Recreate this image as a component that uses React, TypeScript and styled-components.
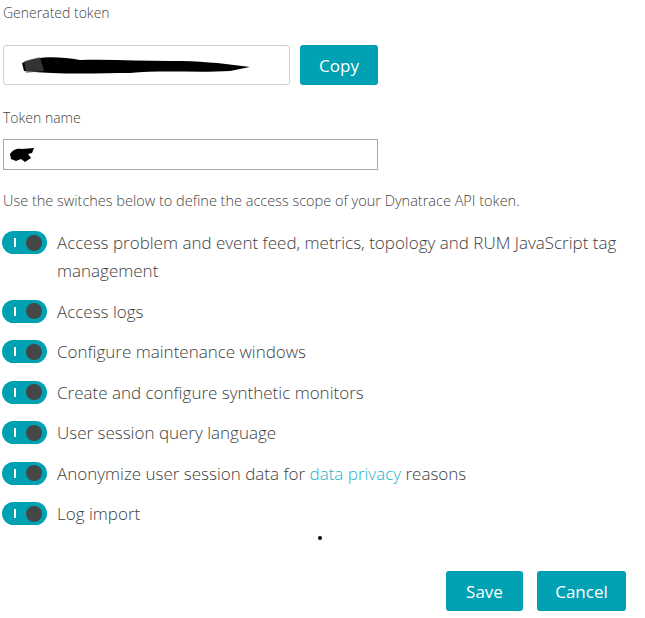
import styled, { createGlobalStyle } from "styled-components";

const accent = "#00a1b2";
const text = "#3d3e3e";

const GlobalStyle = createGlobalStyle`
  html, body {
    margin: 0;
    padding: 0;
    background: #ffffff;
  }
  body {
    font-family: "Open Sans", "Noto Sans", sans-serif;
    font-weight: 300;
    color: ${text};
  }
`;

const Page = styled.div`
  width: 645px;
  height: 618px;
  padding: 3px 19px 0 3px;
  box-sizing: border-box;
  display: flex;
  flex-direction: column;
`;

const Label = styled.div<{ $top?: number; $size?: number }>`
  font-size: ${(p) => p.$size ?? 14}px;
  line-height: 20px;
  color: #444444;
  margin-top: ${(p) => p.$top ?? 0}px;
`;

const TokenRow = styled.div`
  display: flex;
  gap: 10px;
  margin-top: 22px;
`;

const TokenField = styled.div`
  width: 287px;
  height: 40px;
  box-sizing: border-box;
  border: 1px solid #cfcfcf;
  border-radius: 3px;
  display: flex;
  align-items: center;
  padding-left: 16px;
`;

const Button = styled.button<{ $width: number }>`
  width: ${(p) => p.$width}px;
  height: 40px;
  border: none;
  border-radius: 3px;
  background: ${accent};
  color: #ffffff;
  font-family: inherit;
  font-weight: 400;
  font-size: 17px;
  padding: 0;
  cursor: pointer;
`;

const NameField = styled.div`
  width: 375px;
  height: 31px;
  box-sizing: border-box;
  border: 1px solid #a9a9a9;
  margin-top: 11px;
  display: flex;
  align-items: center;
  padding-left: 4px;
`;

const ScopeList = styled.div`
  display: flex;
  flex-direction: column;
  gap: 12.5px;
  margin-top: 18px;
  margin-left: -1px;
`;

const ScopeRow = styled.div`
  display: flex;
  align-items: flex-start;
  gap: 10px;
`;

const Toggle = styled.span`
  flex: none;
  width: 45px;
  height: 23px;
  margin-top: 2px;
  border-radius: 12px;
  background: ${accent};
  display: flex;
  align-items: center;
  justify-content: space-between;
  padding: 0 5px 0 12px;
  box-sizing: border-box;

  &::before {
    content: "";
    width: 2px;
    height: 9px;
    background: #ffffff;
  }

  &::after {
    content: "";
    width: 16px;
    height: 16px;
    border-radius: 50%;
    background: #454646;
  }
`;

const ScopeText = styled.div`
  font-size: 17px;
  line-height: 28px;
  color: ${text};
  max-width: 575px;

  a {
    color: #1eb2c6;
    text-decoration: none;
  }
`;

const Dot = styled.span`
  width: 4px;
  height: 4px;
  border-radius: 50%;
  background: #000000;
  margin: 8px 0 0 315px;
`;

const Footer = styled.div`
  display: flex;
  justify-content: flex-end;
  gap: 14px;
  margin-top: 31px;
`;

const Scribble = ({ wide }: { wide?: boolean }) =>
  wide ? (
    <svg width="232" height="28" viewBox="0 0 232 28">
      <path
        d="M2 12 C20 4 40 6 60 9 C90 8 120 10 150 10 C180 10 200 12 222 15 L230 16 L210 20 C180 22 140 19 110 22 C80 22 40 24 4 20 Z"
        fill="#000"
      />
      <path d="M4 10 L20 6 L24 20 L6 22 Z" fill="#555" opacity="0.6" />
    </svg>
  ) : (
    <svg width="28" height="20" viewBox="0 0 28 20">
      <path
        d="M2 9 C5 4 10 3 14 4 L26 3 L24 8 L20 9 L23 13 L17 17 L13 14 L8 16 L3 14 Z"
        fill="#000"
      />
    </svg>
  );

const scopes: { label: React.ReactNode }[] = [
  { label: "Access problem and event feed, metrics, topology and RUM JavaScript tag management" },
  { label: "Access logs" },
  { label: "Configure maintenance windows" },
  { label: "Create and configure synthetic monitors" },
  { label: "User session query language" },
  {
    label: (
      <>
        Anonymize user session data for <a href="#">data privacy</a> reasons
      </>
    ),
  },
  { label: "Log import" },
];

export default function App() {
  return (
    <>
      <GlobalStyle />
      <Page>
        <Label>Generated token</Label>
        <TokenRow>
          <TokenField>
            <Scribble wide />
          </TokenField>
          <Button $width={78}>Copy</Button>
        </TokenRow>
        <Label $top={23}>Token name</Label>
        <NameField>
          <Scribble />
        </NameField>
        <Label $top={21} $size={14.5}>
          Use the switches below to define the access scope of your Dynatrace API token.
        </Label>
        <ScopeList>
          {scopes.map((s, i) => (
            <ScopeRow key={i}>
              <Toggle />
              <ScopeText>{s.label}</ScopeText>
            </ScopeRow>
          ))}
        </ScopeList>
        <Dot />
        <Footer>
          <Button $width={77}>Save</Button>
          <Button $width={89}>Cancel</Button>
        </Footer>
      </Page>
    </>
  );
}
